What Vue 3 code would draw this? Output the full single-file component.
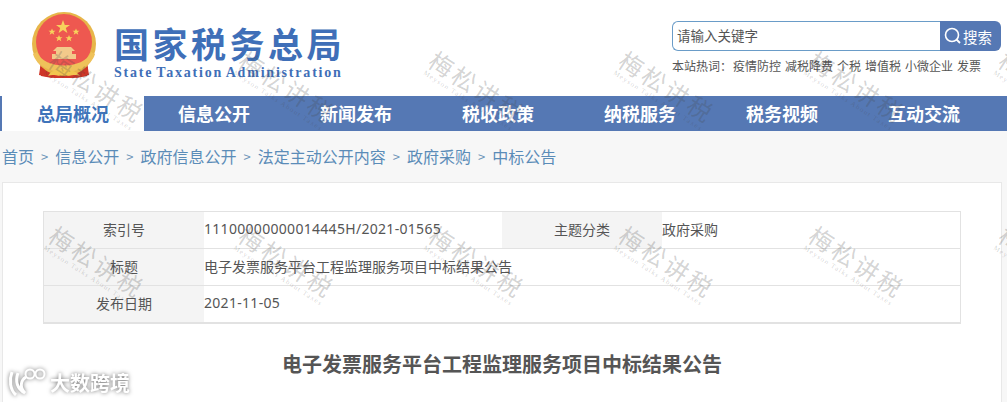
<template>
  <div class="page">
    <header class="header">
      <div class="brand">
        <svg class="emblem" viewBox="0 0 64 66" width="64" height="66">
          <path d="M9 50 L7 63 L22 66 L42 66 L57 63 L55 50 Z" fill="#cf3528" />
          <circle cx="32" cy="32" r="32" fill="#e7b64a" />
          <circle cx="32" cy="30" r="28" fill="#ee5850" />
          <path d="M5 40 C12 58 52 58 59 40 L63 42 C56 66 8 66 1 42 Z" fill="#efc25a" />
          <path d="M8 54 C12 62 18 65 22 64 L20 66 L9 64 Z M56 54 C52 62 46 65 42 64 L44 66 L55 64 Z" fill="#cf3528" />
          <path d="M31 8 L32.800 13 L38 13 L33.800 16 L35.400 21 L31 18 L26.600 21 L28.200 16 L24 13 L29.200 13 Z" fill="#f7d25c" />
          <path d="M20 16.500 L21 18.800 L23.500 18.800 L21.500 20.300 L22.300 22.800 L20 21.300 L17.700 22.800 L18.500 20.300 L16.500 18.800 L19 18.800 Z" fill="#f7d25c" />
          <path d="M44 16.500 L45 18.800 L47.500 18.800 L45.500 20.300 L46.300 22.800 L44 21.300 L41.700 22.800 L42.500 20.300 L40.500 18.800 L43 18.800 Z" fill="#f7d25c" />
          <path d="M27 23 L28 25.300 L30.500 25.300 L28.500 26.800 L29.300 29.300 L27 27.800 L24.700 29.300 L25.500 26.800 L23.500 25.300 L26 25.300 Z" fill="#f7d25c" />
          <path d="M37 23 L38 25.300 L40.500 25.300 L38.500 26.800 L39.300 29.300 L37 27.800 L34.700 29.300 L35.500 26.800 L33.500 25.300 L36 25.300 Z" fill="#f7d25c" />
          <path d="M25 35 L39 35 L43 39 L40 39 L40 42 L44 42 L44 47 L20 47 L20 42 L24 42 L24 39 L21 39 Z" fill="#f3c98a" />
          <path d="M16 64 C20 56 27 60 31 56 C35 60 42 56 48 64 C42 61 37 66 32 62 C27 66 22 61 16 64 Z" fill="#f2c64f" />
        </svg>
        <div class="brand-text">
          <div class="brand-cn">国家税务总局</div>
          <div class="brand-en">State Taxation Administration</div>
        </div>
      </div>
      <div class="search-area">
        <div class="search">
          <div class="search-input">请输入关键字</div>
          <div class="search-btn">
            <svg viewBox="0 0 18 18" width="18" height="18">
              <circle cx="8" cy="8" r="6.500" fill="none" stroke="#fff" stroke-width="1.600" />
              <path d="M12.500 12.500 L16 16" stroke="#fff" stroke-width="1.800" />
            </svg>
            <span>搜索</span>
          </div>
        </div>
        <div class="hot">
          <span class="hot-label">本站热词：</span>
          <span v-for="w in hotWords" :key="w">{{ w }}</span>
        </div>
      </div>
    </header>

    <nav class="nav">
      <a v-for="(item, i) in navItems" :key="item" class="nav-item" :class="{ active: i === 0 }">{{ item }}</a>
    </nav>

    <div class="crumbs">
      <template v-for="(c, i) in crumbs" :key="c">
        <span v-if="i > 0" class="sep">&gt;</span>
        <span>{{ c }}</span>
      </template>
    </div>

    <main class="card">
      <div class="meta">
        <div class="meta-row">
          <div class="label">索引号</div>
          <div class="value num">11100000000014445H/2021-01565</div>
          <div class="label">主题分类</div>
          <div class="value">政府采购</div>
        </div>
        <div class="meta-row">
          <div class="label">标题</div>
          <div class="value wide">电子发票服务平台工程监理服务项目中标结果公告</div>
        </div>
        <div class="meta-row">
          <div class="label">发布日期</div>
          <div class="value num wide">2021-11-05</div>
        </div>
      </div>
      <h1 class="title">电子发票服务平台工程监理服务项目中标结果公告</h1>
    </main>

    <!-- watermark layers sit over the page -->
    <div class="marks">
      <div v-for="n in 12" :key="n" class="mark">
        <div class="mark-cn">梅松讲税</div>
        <div class="mark-en">Meyson Talks About Taxes</div>
      </div>
    </div>

    <div class="stamp">
      <svg viewBox="0 0 38 30" width="38" height="30">
        <path d="M4 5 C1 13 2 23 8 28 M10 6 C7 14 9 22 17 26 C11 20 13 13 18 10" fill="none" stroke="#fff" stroke-width="3" />
        <circle cx="22" cy="7" r="4.500" fill="none" stroke="#fff" stroke-width="2" />
        <circle cx="32" cy="7" r="4.500" fill="none" stroke="#fff" stroke-width="2" />
      </svg>
      <span>大数跨境</span>
    </div>
  </div>
</template>

<script setup>
const hotWords = ['疫情防控', '减税降费', '个税', '增值税', '小微企业', '发票']
const navItems = ['总局概况', '信息公开', '新闻发布', '税收政策', '纳税服务', '税务视频', '互动交流']
const crumbs = ['首页', '信息公开', '政府信息公开', '法定主动公开内容', '政府采购', '中标公告']
</script>

<style>
html,
body {
  margin: 0;
  background: #f7f7f7;
  overflow: hidden;
}
</style>

<style scoped>
.page {
  position: relative;
  width: 1007px;
  height: 402px;
  overflow: hidden;
  font-family: "Noto Sans CJK SC", "Noto Sans", sans-serif;
  color: #555;
}

.header {
  display: flex;
  justify-content: space-between;
  height: 96px;
  background: #fff;
  box-sizing: border-box;
  padding: 12px 6px 0 32px;
}

.brand {
  display: flex;
}

.emblem {
  flex: none;
}

.brand-text {
  margin-left: 18px;
  padding-top: 10px;
}

.brand-cn {
  font-size: 35px;
  line-height: 42px;
  font-weight: 700;
  letter-spacing: 3.500px;
  color: #3f6fb8;
}

.brand-en {
  font-family: "Liberation Serif", serif;
  font-size: 14px;
  line-height: 17px;
  font-weight: 700;
  letter-spacing: 1.800px;
  color: #3f6fb8;
  word-spacing: -2px;
}

.search-area {
  width: 329px;
  padding-top: 9px;
}

.search {
  display: flex;
  width: 329px;
  height: 30px;
}

.search-input {
  flex: 1;
  box-sizing: border-box;
  border: 1px solid #6a9cc8;
  border-right: none;
  border-radius: 6px 0 0 6px;
  padding-left: 4px;
  font-size: 13.500px;
  line-height: 26px;
  color: #555;
}

.search-btn {
  display: flex;
  align-items: center;
  gap: 1px;
  width: 61px;
  box-sizing: border-box;
  padding-left: 4px;
  background: #5578b4;
  border-radius: 0 6px 6px 0;
  color: #fff;
  font-size: 14.500px;
}

.hot {
  display: flex;
  gap: 4px;
  margin-top: 5px;
  font-size: 12px;
  line-height: 20px;
  color: #555;
  white-space: nowrap;
}

.hot-label {
  margin-right: -3px;
}

.nav {
  display: flex;
  height: 35px;
  padding-left: 1px;
  background: #5578b4;
}

.nav-item {
  flex: none;
  width: 142px;
  text-align: center;
  font-size: 18px;
  line-height: 35px;
  font-weight: 700;
  color: #fff;
}

.nav-item.active {
  background: #fff;
  color: #3f74ba;
  border-left: 2px solid #5578b4;
  margin: 0 -1px 0 -1px;
  width: 144px;
  box-sizing: border-box;
}

.crumbs {
  display: flex;
  align-items: center;
  gap: 7px;
  height: 50px;
  padding-left: 2px;
  font-size: 16px;
  color: #5b8cb8;
}

.sep {
  font-size: 13px;
  color: #6d94b8;
}

.card {
  box-sizing: border-box;
  width: 1000px;
  height: 260px;
  margin: 1px 0 0 2px;
  padding: 28px 40px 0;
  background: #fff;
  border: 1px solid #e8e8e8;
}

.meta {
  border: 1px solid #e2e2e2;
  border-bottom-width: 2px;
}

.meta-row {
  display: grid;
  grid-template-columns: 160px 298px 160px 1fr;
  height: 36px;
  border-top: 1px solid #e2e2e2;
}

.meta-row:first-child {
  border-top: none;
}

.label {
  background: #f4f4f4;
  text-align: center;
  font-size: 14px;
  line-height: 34px;
  color: #555;
}

.value {
  font-size: 14px;
  line-height: 34px;
  color: #555;
}

.value.num {
  font-family: "Noto Sans", sans-serif;
  letter-spacing: 0.300px;
}

.wide {
  grid-column: 2 / 5;
}

.title {
  margin: 26px 0 0;
  text-align: center;
  font-size: 20px;
  line-height: 28px;
  font-weight: 700;
  color: #555;
}

.marks {
  position: absolute;
  left: 35px;
  top: 73px;
  display: grid;
  grid-template-columns: repeat(6, 190px);
  grid-auto-rows: 175px;
  pointer-events: none;
}

.mark {
  width: 120px;
  height: 34px;
  transform: rotate(33deg);
  color: rgba(70, 70, 70, 0.24);
  text-align: center;
}

.mark-cn {
  font-size: 24px;
  line-height: 26px;
  letter-spacing: 3px;
  white-space: nowrap;
}

.mark-en {
  font-family: "Liberation Serif", serif;
  font-size: 7px;
  line-height: 8px;
  letter-spacing: 1.200px;
  white-space: nowrap;
}

.stamp {
  position: absolute;
  left: 8px;
  top: 367px;
  display: flex;
  align-items: center;
  gap: 4px;
  color: #fff;
  font-size: 20px;
  font-weight: 700;
  filter: drop-shadow(0 0 2px rgba(0, 0, 0, 0.55));
}
</style>
